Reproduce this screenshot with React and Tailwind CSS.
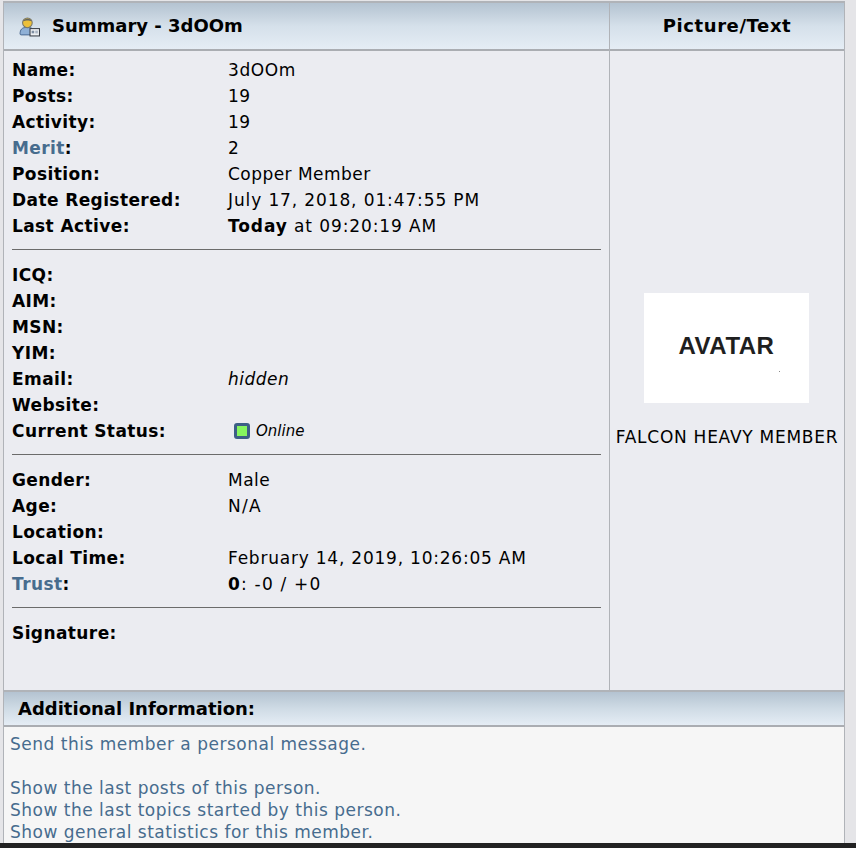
const font = "font-['DejaVu_Sans','Liberation_Sans',sans-serif]";

function Row({ label, blue, track, children }) {
  return (
    <div className="flex h-[26px] items-center">
      <div className="w-[216px] shrink-0 font-bold text-black tracking-[0.4px]">
        {blue ? <><span className="text-[#476c8e]">{label}</span>:</> : label + ':'}
      </div>
      <div className={`text-black ${track || 'tracking-[0.5px]'}`}>{children}</div>
    </div>
  );
}

function Rule() {
  return <div className="h-px bg-[#6b6b6b] w-[589px]" />;
}

function UserIcon() {
  return (
    <svg width="21" height="21" viewBox="0 0 20 20" className="shrink-0">
      <path d="M1 17c0-4 2-6 5-6h4c2 0 3 1 3 3v4H2c-.6 0-1-.4-1-1z" fill="#8fb0d6" stroke="#3c5c86" strokeWidth="0.8" />
      <circle cx="8" cy="6.500" r="4.600" fill="#ecc03a" stroke="#77776a" strokeWidth="1" />
      <path d="M4 5c.6-3 7-3.500 8 0-2-1-6-1-8 0z" fill="#66665c" />
      <rect x="10.500" y="12" width="9" height="7" fill="#eef1f4" stroke="#3a3f48" strokeWidth="1" />
      <rect x="12" y="14" width="2.500" height="2.500" fill="#7d8ea3" />
      <path d="M15.500 14.500h2.500M15.500 16h2.500" stroke="#7d8ea3" strokeWidth="0.800" />
    </svg>
  );
}

export default function App() {
  return (
    <div className={`${font} w-[856px] h-[848px] overflow-hidden bg-[#e5e5e8] text-[17px] leading-[26px] flex flex-col`}>
      <div className="h-[843px] pt-px">
        <div className="ml-[3px] w-[842px] h-[842px] border-x border-t-2 border-[#b0b3b8] bg-[#f6f6f6] flex flex-col">
          <div className="flex h-[687px] shrink-0 bg-[#ebecf1]">
            <div className="w-[605px] shrink-0 flex flex-col">
              <div className="h-[48px] shrink-0 border-b-2 border-[#aaadb2] bg-gradient-to-b from-[#b4c3d1] via-[#d5e0ea] to-[#e5edf5] flex items-center gap-[12px] pl-[15px] font-bold text-black text-[18px]">
                <UserIcon />
                <span>Summary - 3dOOm</span>
              </div>
              <div className="pl-[8px] pt-[6px] flex flex-col">
                <Row label="Name" track="tracking-[0.6px]">3dOOm</Row>
                <Row label="Posts">19</Row>
                <Row label="Activity">19</Row>
                <Row label="Merit" blue>2</Row>
                <Row label="Position" track="tracking-[0.46px]">Copper Member</Row>
                <Row label="Date Registered" track="tracking-[0.88px]">July 17, 2018, 01:47:55 PM</Row>
                <Row label="Last Active" track="tracking-[0.9px]"><b>Today</b> at 09:20:19 AM</Row>
                <div className="mt-[10px] mb-[12px]"><Rule /></div>
                <Row label="ICQ" />
                <Row label="AIM" />
                <Row label="MSN" />
                <Row label="YIM" />
                <Row label="Email"><i>hidden</i></Row>
                <Row label="Website" />
                <Row label="Current Status">
                  <span className="flex items-center gap-[6px] pl-[6px] italic text-[15px] tracking-normal">
                    <span className="w-[16px] h-[16px] rounded-[3px] border-[3px] border-[#3d5f86] bg-[#86f65f]" />
                    Online
                  </span>
                </Row>
                <div className="mt-[10px] mb-[12px]"><Rule /></div>
                <Row label="Gender">Male</Row>
                <Row label="Age" track="tracking-[1.3px]">N/A</Row>
                <Row label="Location" />
                <Row label="Local Time" track="tracking-[0.78px]">February 14, 2019, 10:26:05 AM</Row>
                <Row label="Trust" blue track="tracking-[1.2px]"><b>0</b>: -0 / +0</Row>
                <div className="mt-[10px] mb-[12px]"><Rule /></div>
                <Row label="Signature" />
              </div>
            </div>
            <div className="flex-1 border-l border-[#b0b3b8] flex flex-col">
              <div className="h-[48px] shrink-0 border-b-2 border-[#aaadb2] bg-gradient-to-b from-[#b4c3d1] via-[#d5e0ea] to-[#e5edf5] flex items-center justify-center font-bold text-black text-[18px] tracking-[0.6px]">
                Picture/Text
              </div>
              <div className="flex-1 flex flex-col items-center pt-[242px]">
                <div className="relative w-[165px] h-[110px] -ml-px bg-white flex items-center justify-center pb-[4px] font-['Liberation_Sans',sans-serif] font-bold text-[#1f1f1f] text-[24px] tracking-[0.5px]">
                  AVATAR
                  <span className="absolute left-[135px] top-[78px] w-px h-px bg-[#8a8a8a]" />
                </div>
                <div className="mt-[21px] text-black whitespace-nowrap tracking-[0.74px]">FALCON HEAVY MEMBER</div>
              </div>
            </div>
          </div>
          <div className="h-[37px] shrink-0 border-y-2 border-t-[#b0b3b8] border-b-[#aaadb2] bg-gradient-to-b from-[#b4c3d1] via-[#cfdbe5] to-[#e5edf5] flex items-center pl-[14px] font-bold text-black text-[18px]">
            Additional Information:
          </div>
          <div className="pl-[6px] pt-[6px] text-[#476c8e] tracking-[0.5px]">
            <div className="h-[22px] leading-[22px]">Send this member a personal message.</div>
            <div className="h-[22px]" />
            <div className="h-[22px] leading-[22px]">Show the last posts of this person.</div>
            <div className="h-[22px] leading-[22px]">Show the last topics started by this person.</div>
            <div className="h-[22px] leading-[22px]">Show general statistics for this member.</div>
          </div>
        </div>
      </div>
      <div className="h-[5px] bg-[#222222]" />
    </div>
  );
}
